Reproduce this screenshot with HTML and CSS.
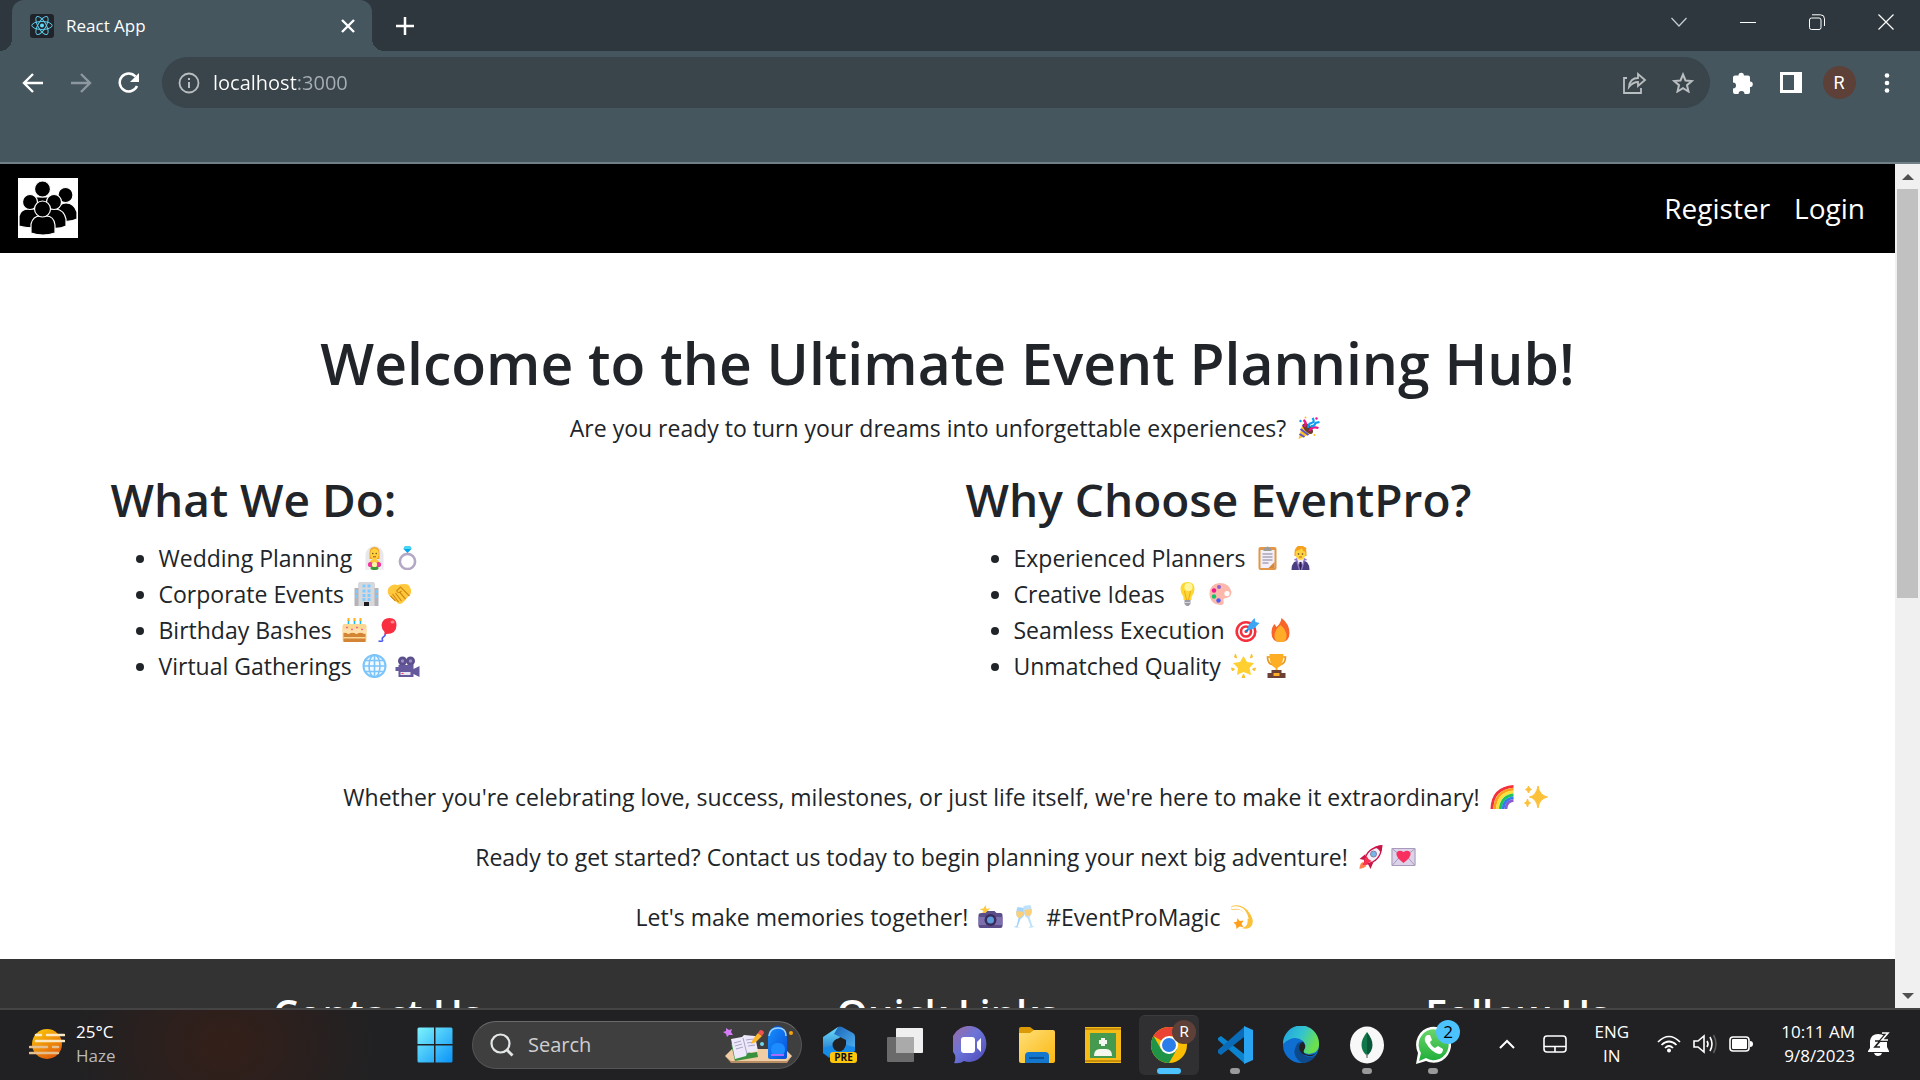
FILE: index.html
```html
<!DOCTYPE html>
<html lang="en">
<head>
<meta charset="utf-8">
<title>React App</title>
<link rel="stylesheet" href="styles.css">
</head>
<body>
<svg class="sprite" aria-hidden="true">
  <defs>
    <linearGradient id="g-win" x1="0" y1="0" x2="1" y2="1"><stop offset="0" stop-color="#7df3fc"/><stop offset="1" stop-color="#0a93f8"/></linearGradient>
    <linearGradient id="g-sun" x1="0" y1="0" x2="0.6" y2="1"><stop offset="0" stop-color="#fccf08"/><stop offset="1" stop-color="#e35f0b"/></linearGradient>
    <linearGradient id="g-chat" x1="0" y1="0" x2="1" y2="1"><stop offset="0" stop-color="#a06a9e"/><stop offset="0.45" stop-color="#6b74d8"/><stop offset="1" stop-color="#4d49b8"/></linearGradient>
    <linearGradient id="g-folder" x1="0" y1="0" x2="1" y2="1"><stop offset="0" stop-color="#ffdf79"/><stop offset="1" stop-color="#fbb811"/></linearGradient>
    <linearGradient id="g-m1" x1="0" y1="0" x2="0" y2="1"><stop offset="0" stop-color="#6fe0fa"/><stop offset="1" stop-color="#0f62c4"/></linearGradient>
    <linearGradient id="g-m2" x1="0" y1="0" x2="1" y2="1"><stop offset="0" stop-color="#1a63b8"/><stop offset="1" stop-color="#4fb4f0"/></linearGradient>
    <linearGradient id="g-edge" x1="0" y1="0" x2="1" y2="0.4"><stop offset="0" stop-color="#1f9fe0"/><stop offset="0.55" stop-color="#33c4d0"/><stop offset="1" stop-color="#6be04c"/></linearGradient>
    <linearGradient id="g-bag" x1="0" y1="0" x2="1" y2="1"><stop offset="0" stop-color="#1590ff"/><stop offset="1" stop-color="#0a4fd8"/></linearGradient>
    <linearGradient id="g-wa" x1="0" y1="0" x2="0" y2="1"><stop offset="0" stop-color="#6bd56b"/><stop offset="1" stop-color="#1fae39"/></linearGradient>
  </defs>
  <symbol id="popper" viewBox="0 0 24 24"><path d="M2 23 6 8q7 2 10 9z" fill="#fcc21b"/><path d="m3 18 5 3m-4-8 8 6M6 9l8 8" stroke="#5b51d8" stroke-width="2"/><ellipse cx="11.500" cy="12.500" rx="3.500" ry="6.500" transform="rotate(-42 11.500 12.500)" fill="#6d3b2c"/><path d="M8 11Q11 7 7 4M13 15q2-5 9-3" stroke="#f2138b" stroke-width="2.200" fill="none"/><path d="M12 12q-1-4 3-5t1-5M14 10q4 1 5-3l4-1" stroke="#0f9df2" stroke-width="2.200" fill="none"/><circle cx="20" cy="2.500" r="1.200" fill="#f2138b"/><circle cx="4" cy="5" r="1.200" fill="#0f9df2"/><circle cx="9" cy="1.500" r="1" fill="#fcc21b"/><circle cx="18" cy="19" r="1" fill="#fcc21b"/></symbol>
  <symbol id="bride" viewBox="0 0 24 24"><path d="M3 24V9a9 9 0 0 1 18 0v15z" fill="#e8e8ec"/><path d="M4 24q0-9 8-9t8 9z" fill="#f4f0f2"/><path d="M7 7q0-6 5-6t5 6v6H7z" fill="#f5a623"/><ellipse cx="12" cy="8" rx="4.300" ry="5.500" fill="#ffd23f"/><path d="M7 17q1-4 5-4t5 4z" fill="#ffc83d"/><circle cx="10.300" cy="7.500" r=".7" fill="#5a3a22"/><circle cx="13.700" cy="7.500" r=".7" fill="#5a3a22"/><path d="M10.500 10.800h3" stroke="#c0392b"/><ellipse cx="12" cy="22" rx="4" ry="2" fill="#3a9b35"/><circle cx="8" cy="18.500" r="2.600" fill="#f0379a"/><circle cx="16" cy="18.500" r="2.600" fill="#f0379a"/><circle cx="12" cy="18.500" r="2.600" fill="#fdf3a0"/></symbol>
  <symbol id="ring" viewBox="0 0 24 24"><circle cx="12" cy="15.500" r="7.600" fill="none" stroke="#b4a9c4" stroke-width="2.600"/><path d="m12 7-4-4 1.500-3h5L16 3z" fill="#08a4ea"/><path d="M8 3 9.500 0h5L16 3z" fill="#44d8f5"/></symbol>
  <symbol id="office" viewBox="0 0 24 24"><path d="M0 6h4V2q0-2 2-2h12q2 0 2 2v4h4v18H0z" fill="#b3b3b8"/><path d="M4 2q0-2 2-2h12q2 0 2 2v22H4z" fill="#d8d8dc"/><path d="M8 2.500h3v3H8zm5 0h3v3h-3zm-5 5h3v3H8zm5 0h3v3h-3zm-5 4.500h3v3H8zm5 0h3v3h-3zm-5 4h3v3H8zm5 0h3v3h-3zM1 8h2v3H1zm0 5h2v3H1zm20-5h2v3h-2zm0 5h2v3h-2z" fill="#7ecbff"/><path d="M9.500 20h5v4h-5z" fill="#1d1d20"/></symbol>
  <symbol id="handshake" viewBox="0 0 24 24"><path d="M1 6q4-5 9-3 8-2 11 0 4 5 2 9l-7 8q-4 4-7 0L2 14Q-1 10 1 6z" fill="#ffc83d"/><path d="m3 14 5 5m-3-7 6 8m-3-9 6 8m-2-9 6 7M9 9l4-4 9 9M9 9q2 3 5 0" fill="none" stroke="#d18a12" stroke-width="1.200"/></symbol>
  <symbol id="cake" viewBox="0 0 24 24"><path d="M6 2v6m6-6v6m6-6v6" stroke="#22b8e8" stroke-width="1.600"/><path d="M6 0v3m6-3v3m6-3v3" stroke="#ffb01f" stroke-width="2"/><rect y="6" width="24" height="18" rx="2" fill="#fbd794"/><path d="M1 15h22v9H1z" fill="#d38435"/><path d="M1 19h22v1.500H1z" fill="#fbd794"/><path d="M0 11h24v4q-2 2-4 0t-4 0-4 0-4 0-4 0-4 0z" fill="#ffe1ad"/><path d="m4 9 1 1m4 2 1-1m4-2 1 1m4 2 1-1" stroke="#f0379a" stroke-width="1.400"/></symbol>
  <symbol id="balloon" viewBox="0 0 24 24"><path d="M10 15q0 3-2 4t-1 3-4 1" stroke="#4b5cf0" stroke-width="1.500" fill="none"/><path d="M14 0q7 0 7 7 0 9-10 9l-2 1 0-3Q6 11 6 7q1-7 8-7z" fill="#f92f40"/><ellipse cx="17" cy="4" rx="2" ry="1.500" fill="#ff8791"/></symbol>
  <symbol id="globe" viewBox="0 0 24 24"><circle cx="12" cy="12" r="11" fill="#f3faff" stroke="#7cc4fa" stroke-width="2"/><g fill="none" stroke="#7cc4fa" stroke-width="1.600"><ellipse cx="12" cy="12" rx="5.500" ry="11"/><path d="M12 1v22M1 12h22M3 6.500h18M3 17.500h18"/></g></symbol>
  <symbol id="camera-movie" viewBox="0 0 24 24"><circle cx="7" cy="7" r="4.500" fill="#5b4f8c"/><circle cx="15" cy="7" r="4.500" fill="#5b4f8c"/><circle cx="7" cy="7" r="1.700" fill="#9a8cc4"/><circle cx="15" cy="7" r="1.700" fill="#9a8cc4"/><path d="M0 13h3v-2h15v4l6-3v11l-6-3v3H3v-6H0z" fill="#65589c"/><path d="M5 18h10v3H5z" fill="#e8e4f0"/><path d="M6 19h2v1H6z" fill="#f92f60"/></symbol>
  <symbol id="clipboard" viewBox="0 0 24 24"><rect x="3" y="1" width="18" height="23" rx="2" fill="#e19747"/><path d="M5 4h14v18H5z" fill="#f3eef8"/><path d="m13 22 6-6v6z" fill="#d3883e"/><path d="M8 4q0-2 2-2 2-3 4 0 2 0 2 2v1H8z" fill="#9b9b9b"/><path d="M7 8h10M7 11h10M7 14h10M7 17h6" stroke="#a9a5b5" stroke-width="1.300"/></symbol>
  <symbol id="office-worker" viewBox="0 0 24 24"><path d="M3 24q0-10 9-10t9 10z" fill="#4a3d80"/><path d="m8 14 4 9 4-9z" fill="#f0ecf8"/><path d="m11 16-1 8h4l-1-8z" fill="#2a2350"/><path d="m6 14 2-1 3 11M18 14l-2-1-3 11" stroke="#9377c8" stroke-width="1.500" fill="none"/><path d="M6 7q0-7 6-7t6 7v3H6z" fill="#f5a11f"/><ellipse cx="12" cy="8" rx="5" ry="6" fill="#ffd23f"/><path d="M7 5q5-1 6-3 1 3 4 4l1-4-4-2H9z" fill="#f5a11f"/><circle cx="10" cy="8" r=".8" fill="#5a3a22"/><circle cx="14" cy="8" r=".8" fill="#5a3a22"/><path d="M10.500 11h3" stroke="#b76a1c"/></symbol>
  <symbol id="bulb" viewBox="0 0 24 24"><path d="M12 0q7 0 7 7 0 4-3 8v3H8v-3Q5 11 5 7q0-7 7-7z" fill="#fdd835"/><circle cx="13" cy="5" r="4" fill="#fff59d"/><path d="m9 9 2 9h2l2-9" fill="none" stroke="#f0a81c"/><path d="M9 18h6v4l-2 2h-2l-2-2z" fill="#9c9ca6"/><path d="M9 20.500h6" stroke="#d6d6dc"/></symbol>
  <symbol id="palette" viewBox="0 0 24 24"><path d="M11 1q10 0 12 9 0 5-5 6-4 0-3 3t-2 4Q2 23 1 12 1 2 11 1z" fill="#fbb8ab"/><circle cx="10.500" cy="5" r="2" fill="#8c62d0"/><circle cx="5.500" cy="8.500" r="2.200" fill="#f0188c"/><circle cx="5.500" cy="14.500" r="2.200" fill="#14c26c"/><circle cx="10" cy="18.500" r="2.200" fill="#4b5cf0"/><circle cx="18.500" cy="11.500" r="2.600" fill="#fff"/></symbol>
  <symbol id="target" viewBox="0 0 24 24"><circle cx="10.500" cy="13.500" r="9.300" fill="#fff" stroke="#f4303c" stroke-width="2.600"/><circle cx="10.500" cy="13.500" r="5" fill="#fff" stroke="#f4303c" stroke-width="2.600"/><circle cx="10.500" cy="13.500" r="1.600" fill="#f4303c"/><path d="m10.500 13.500 9-9" stroke="#1577c9" stroke-width="2"/><path d="m12 12 1-5 6-7 1 4 4 1-6 6z" fill="#3ba7f5"/></symbol>
  <symbol id="fire" viewBox="0 0 24 24"><path d="M13 0q8 6 8 15 0 9-9 9t-9-9q0-6 3-9l2 3q4-3 5-9z" fill="#f8652a"/><path d="M12 7q6 5 6 11 0 6-6 6t-6-6q0-6 6-11z" fill="#ffad28"/></symbol>
  <symbol id="glowing-star" viewBox="0 0 24 24"><path d="m12 2 3.500 6 7 1-4.500 5 1.500 7-7.500-3-6.500 3 1-7-5-5 7-1z" fill="#ffd02f"/><path d="m4 0 1 4-2-1zm16 0-1 4 2-1zM0 14l3 1-2 2zm24 0-3 1 2 2zM12 20l1.500 4h-3z" fill="#fbc02d" stroke="#fbc02d"/></symbol>
  <symbol id="trophy" viewBox="0 0 24 24"><path d="M6 3H3q0 7 6 8m9-8h3q0 7-6 8" fill="none" stroke="#e8971e" stroke-width="1.700"/><path d="M5 0h14q0 12-6 14v4h-2v-4Q5 12 5 0z" fill="#fdae25"/><path d="M7 16h10v3h4v5H3v-5h4z" fill="#6d4234"/><path d="M9 19h6v3H9z" fill="#fdae25"/></symbol>
  <symbol id="rainbow" viewBox="0 0 24 24"><g fill="none" stroke-width="2.800"><path d="M1.400 24Q2 3 23 1.400" stroke="#f4303c"/><path d="M4.200 24Q5 6 23 4.200" stroke="#ff9f1c"/><path d="M7 24Q8 8 23 7" stroke="#fce03a"/><path d="M9.800 24Q11 11 23 9.800" stroke="#1dc35b"/><path d="M12.600 24Q13 14 23 12.600" stroke="#2f7bf0"/><path d="M15.400 24Q16 16 23 15.400" stroke="#8c5bd0"/></g></symbol>
  <symbol id="sparkles" viewBox="0 0 24 24"><path d="M14.500 1q1.500 9.500 9.500 11-8 1.500-9.500 11Q13 13.500 6 12q7-1.500 8.500-11zM5 1q.5 3 3 3.500Q5.500 5 5 8q-.5-3-3-3.500Q4.500 4 5 1zM4 14q.5 3.500 3 4-2.500.5-3 4-.5-3.500-3-4 2.500-.5 3-4z" fill="#fcc13a" stroke="#fcc13a"/></symbol>
  <symbol id="rocket" viewBox="0 0 24 24"><path d="m7 9-6 5 5 1zm8 8-3 7-3-6z" fill="#ca1448"/><path d="M4 17q-3 2-3 7 5-1 7-3z" fill="#ff7f4d"/><path d="M6 16Q8 3 23 1q0 15-15 18z" fill="#f3eff7" stroke="#ca1448" stroke-width="1.300"/><path d="M16 2q4-2 8-2 0 4-2 8-1-4-6-6z" fill="#ca1448"/><path d="m4 20 4-9 2 3 3 2-6 4z" fill="#f92f50"/><circle cx="15" cy="9" r="3" fill="#76b7e8" stroke="#8d7ca5"/></symbol>
  <symbol id="love-letter" viewBox="0 0 24 24"><rect x="0" y="3" width="24" height="18" rx="1" fill="#dcd3e8"/><path d="m1 4 11 9L23 4M1 20l8-9m14 9-8-9M.5 3.500h23v17H.5z" fill="none" stroke="#a99abc"/><path d="M12 18Q4 12 5 8q2-4 7-1 5-3 7 1 1 4-7 10z" fill="#f92f60"/></symbol>
  <symbol id="flash-camera" viewBox="0 0 24 24"><path d="m7 0 1 4 4-1-3 3 2 3H3l2-3-4-2 4-.5z" fill="#ffc83d"/><path d="M3 8h4l2-2h7l2 2h4q2 0 2 2v11q0 2-2 2H2q-2 0-2-2V10q0-2 3-2z" fill="#5a4d8a"/><path d="M0 12h24v8H0z" fill="#7d6fae"/><circle cx="12" cy="15" r="6" fill="#382c5c"/><circle cx="12" cy="15" r="3.500" fill="#5f9bd8"/></symbol>
  <symbol id="glasses" viewBox="0 0 24 24"><path d="m6 2 7 1q1 9-4 11l-3 8 3 1-7-1 3-1 2-8q-4-3-1-11z" fill="#a7d5fa"/><path d="m12 1 7-1q3 8-1 12l3 9 2 1-6 1 2-2-3-8q-5-2-4-12z" fill="#bfe1fb"/><path d="m5 6 7 1q0 5-4 6-4-1-3-7zm8-1 7-1q1 6-3 7-4 0-4-6z" fill="#fccf7a"/></symbol>
  <symbol id="dizzy" viewBox="0 0 24 24"><path d="M1 1q11-3 18 7 6 9 1 14-3 3-9 1 7-1 6-9Q14 2 1 5z" fill="#fcc13a"/><path d="M1 3Q14 0 17 14" stroke="#fff" stroke-width="2.500" fill="none"/><path d="m7 13 2 3 4-.5-2 3.500 2 3-4-.5L6 24l-.5-4L3 17.500l3.500-1z" fill="#ff9f1c"/></symbol>
</svg>

<header class="browser">
  <div class="tabstrip">
    <div class="tab">
      <svg class="favicon" viewBox="0 0 24 24"><rect width="24" height="24" rx="3" fill="#20232a"/><g fill="none" stroke="#5ccbe8" stroke-width="1"><ellipse cx="12" cy="11.500" rx="10.200" ry="4"/><ellipse cx="12" cy="11.500" rx="10.200" ry="4" transform="rotate(60 12 11.500)"/><ellipse cx="12" cy="11.500" rx="10.200" ry="4" transform="rotate(120 12 11.500)"/></g><circle cx="12" cy="11.500" r="2" fill="#61dafb"/></svg>
      <span class="tab-title">React App</span>
      <button class="tab-close" aria-label="Close tab"><svg width="14" height="14" viewBox="0 0 14 14"><path d="m1 1 12 12M13 1 1 13" stroke="#fff" stroke-width="2.400"/></svg></button>
    </div>
    <button class="new-tab" aria-label="New tab"><svg width="18" height="18" viewBox="0 0 18 18"><path d="M9 0v18M0 9h18" stroke="#fff" stroke-width="2.500"/></svg></button>
    <div class="window-controls">
      <button aria-label="Search tabs"><svg width="16" height="16" viewBox="0 0 16 16"><path d="m.5 4 7.500 8 7.500-8" fill="none" stroke="#c9cdd0" stroke-width="1.200"/></svg></button>
      <button aria-label="Minimize"><svg width="16" height="16" viewBox="0 0 16 16"><path d="M0 8.500h16" stroke="#fff"/></svg></button>
      <button aria-label="Restore"><svg width="16" height="16" viewBox="0 0 16 16"><rect x=".5" y="4" width="11.500" height="11.500" rx="2" fill="none" stroke="#fff"/><path d="M3 .8h8.500q4 0 4 4V12" fill="none" stroke="#fff"/></svg></button>
      <button aria-label="Close"><svg width="16" height="16" viewBox="0 0 16 16"><path d="m.5.5 15 15m0-15-15 15" stroke="#fff" stroke-width="1.200"/></svg></button>
    </div>
  </div>
  <div class="toolbar">
    <div class="tool-group">
      <button aria-label="Back"><svg width="22" height="20" viewBox="0 0 22 20"><path d="M21 10H2m9-9-9 9 9 9" fill="none" stroke="#fff" stroke-width="2.400"/></svg></button>
      <button aria-label="Forward"><svg width="22" height="20" viewBox="0 0 22 20"><path d="M1 10h19m-9-9 9 9-9 9" fill="none" stroke="#8d989e" stroke-width="2.400"/></svg></button>
      <button aria-label="Reload"><svg width="22" height="22" viewBox="0 0 22 22"><path d="M17.500 4.500A9 9 0 1 0 19 14" fill="none" stroke="#fff" stroke-width="2.500"/><path d="M21 1v9h-9z" fill="#fff"/></svg></button>
    </div>
    <div class="omnibox">
      <svg width="22" height="22" viewBox="0 0 22 22"><circle cx="11" cy="11" r="9.500" fill="none" stroke="#b9bec1" stroke-width="1.800"/><path d="M11 10v6M11 6v2" stroke="#b9bec1" stroke-width="2"/></svg>
      <input class="url" type="text" aria-label="Address" value="localhost:3000">
      <button aria-label="Share"><svg width="24" height="22" viewBox="0 0 24 22"><path d="M4 6H1v15h17v-5" fill="none" stroke="#b9bec1" stroke-width="1.800"/><path d="M6 15Q7 6 15 6V2l7 6-7 6v-4q-5 0-9 5z" fill="none" stroke="#b9bec1" stroke-width="1.800"/></svg></button>
      <button aria-label="Bookmark"><svg width="22" height="21" viewBox="0 0 22 21"><path d="m11 2.500 2.500 6 6.300.5-4.800 4.200 1.500 6.300L11 16.200l-5.500 3.300L7 13.200 2.200 9l6.300-.5z" fill="none" stroke="#b9bec1" stroke-width="2"/></svg></button>
    </div>
    <div class="tool-group">
      <button aria-label="Extensions"><svg width="22" height="22" viewBox="0 0 22 22"><path d="M3 3.500h3.500a2.700 2.700 0 0 1 5.400 0H16q2 0 2 2v4a2.800 2.800 0 0 1 0 5.600V20q0 2-2 2h-3.500a3 3 0 0 0-6 0H3q-2 0-2-2v-3.500a3 3 0 0 0 0-6v-5q0-2 2-2z" fill="#fff"/></svg></button>
      <button aria-label="Side panel"><svg width="22" height="21" viewBox="0 0 22 21"><path d="M0 0h22v21H0zm3 3v15h11V3z" fill="#fff" fill-rule="evenodd"/></svg></button>
      <button aria-label="Profile"><span class="avatar">R</span></button>
      <button aria-label="Menu"><svg width="6" height="20" viewBox="0 0 6 20"><g fill="#fff"><circle cx="3" cy="2.500" r="2.300"/><circle cx="3" cy="10" r="2.300"/><circle cx="3" cy="17.500" r="2.300"/></g></svg></button>
    </div>
  </div>
</header>

<div class="viewport">
  <div class="page">
    <nav class="navbar">
      <a href="#" aria-label="Home"><svg class="logo" viewBox="0 0 60 60"><rect width="60" height="60" fill="#fff"/><g stroke="#fff" stroke-width="1.200"><path d="M39 43V33q2-8 9-8 8 0 11 9v7q-5 3-14 2z"/><circle cx="47.500" cy="17" r="7.500"/><path d="M17 33V19h16v14z"/><circle cx="24.500" cy="11" r="8"/><path d="M1 48V38q2-7 9-7h11v19q-14 0-20-2z"/><path d="M29 49V31h9q8 1 10 10v7q-8 4-19 1z"/><circle cx="12" cy="24" r="7.500"/><circle cx="36" cy="24" r="7.500"/><path d="M13 55V46q2-8 9-8h6q8 0 9 9v8q-12 4-24 0z"/><circle cx="24.500" cy="31" r="8"/></g></svg></a>
      <div class="nav-links">
        <a href="#register">Register</a>
        <a href="#login">Login</a>
      </div>
    </nav>
    <main class="container">
      <section class="intro">
        <h1>Welcome to the Ultimate Event Planning Hub!</h1>
        <p>Are you ready to turn your dreams into unforgettable experiences? <svg class="emoji"><use href="#popper"/></svg></p>
      </section>
      <div class="row">
        <section class="col">
          <h2>What We Do:</h2>
          <ul>
            <li>Wedding Planning <svg class="emoji"><use href="#bride"/></svg><svg class="emoji"><use href="#ring"/></svg></li>
            <li>Corporate Events <svg class="emoji"><use href="#office"/></svg><svg class="emoji"><use href="#handshake"/></svg></li>
            <li>Birthday Bashes <svg class="emoji"><use href="#cake"/></svg><svg class="emoji"><use href="#balloon"/></svg></li>
            <li>Virtual Gatherings <svg class="emoji"><use href="#globe"/></svg><svg class="emoji"><use href="#camera-movie"/></svg></li>
          </ul>
        </section>
        <section class="col">
          <h2>Why Choose EventPro?</h2>
          <ul>
            <li>Experienced Planners <svg class="emoji"><use href="#clipboard"/></svg><svg class="emoji"><use href="#office-worker"/></svg></li>
            <li>Creative Ideas <svg class="emoji"><use href="#bulb"/></svg><svg class="emoji"><use href="#palette"/></svg></li>
            <li>Seamless Execution <svg class="emoji"><use href="#target"/></svg><svg class="emoji"><use href="#fire"/></svg></li>
            <li>Unmatched Quality <svg class="emoji"><use href="#glowing-star"/></svg><svg class="emoji"><use href="#trophy"/></svg></li>
          </ul>
        </section>
      </div>
      <section class="closing">
        <p>Whether you're celebrating love, success, milestones, or just life itself, we're here to make it extraordinary! <svg class="emoji"><use href="#rainbow"/></svg><svg class="emoji"><use href="#sparkles"/></svg></p>
        <p>Ready to get started? Contact us today to begin planning your next big adventure! <svg class="emoji"><use href="#rocket"/></svg><svg class="emoji"><use href="#love-letter"/></svg></p>
        <p>Let's make memories together! <svg class="emoji"><use href="#flash-camera"/></svg><svg class="emoji"><use href="#glasses"/></svg> #EventProMagic <svg class="emoji"><use href="#dizzy"/></svg></p>
      </section>
    </main>
    <footer class="footer">
      <div class="footer-row">
        <h3>Contact Us</h3>
        <h3>Quick Links</h3>
        <h3>Follow Us</h3>
      </div>
    </footer>
  </div>
  <div class="scrollbar">
    <svg width="12" height="6" viewBox="0 0 12 6"><path d="m6 0 6 6H0z" fill="#505050"/></svg>
    <div class="track"><div class="thumb"></div></div>
    <svg width="12" height="6" viewBox="0 0 12 6"><path d="M0 0h12L6 6z" fill="#505050"/></svg>
  </div>
</div>

<footer class="taskbar">
  <div class="weather">
    <svg width="36" height="32" viewBox="0 0 36 32"><circle cx="18" cy="16" r="15" fill="url(#g-sun)"/><g stroke-width="2.600" stroke-linecap="round"><path d="M7 7h5m6 0h17M7 13h28" stroke="#fbe7c0"/><path d="M1 19h17m6 0h5M1 25h28" stroke="#e6bf8f"/></g></svg>
    <div class="stack"><span>25°C</span><span class="dim">Haze</span></div>
  </div>
  <div class="apps">
    <button class="app" aria-label="Start"><svg width="36" height="36" viewBox="0 0 36 36"><path d="M2 .5h15v16.500H.5V2q0-1.500 1.500-1.500zM18.500.5H34q1.500 0 1.500 1.500v15h-17zM.5 18.500H17v17H2q-1.500 0-1.500-1.500zM18.500 18.500h17V34q0 1.500-1.500 1.500H18.500z" fill="url(#g-win)"/></svg></button>
    <div class="search">
      <svg width="24" height="24" viewBox="0 0 24 24"><circle cx="10.500" cy="10.500" r="9" fill="none" stroke="#e4e7e8" stroke-width="2.200"/><path d="m17 17 5.500 5.500" stroke="#e4e7e8" stroke-width="2.800"/></svg>
      <input type="search" aria-label="Search" placeholder="Search">
      <svg width="72" height="40" viewBox="0 0 72 40"><path d="m2 31 7-7h53l7 7-5 6H8z" fill="#f0cda4"/><path d="m3 32 5 4h56l4-4-4 6H8z" fill="#b98d64"/><path d="m8 19 3-1 17 10 6-1 1 5-23 4z" fill="#37913e"/><path d="m8 14 11-2 2-2 11 1 3 15-11 2-1 3-11 3z" fill="#eee9fa"/><path d="m20 13 4 16M11 18l7-2m-6 5 7-2m-6 5 7-2m3-7 7-1m-6 4 7-1m-6 4 7-1" stroke="#aaa0c8"/><path d="m28 19 2-5 5-6 4 3-6 6z" fill="#fdb62c"/><path d="m35 8 2-3q4 0 4 3l-2 3z" fill="#ef5350"/><path d="m3 3 3 2 3-1-1 3 2 3H6l-2 2-1-3-3-2 3-1z" fill="#d47cf5"/><path d="M49 5q6-7 11 0" fill="none" stroke="#114fb5" stroke-width="2"/><path d="M45 13q0-11 10-11 9 0 9 11v19q0 2-3 2H48q-3 0-3-2z" fill="url(#g-bag)"/><path d="M46 11q1-8 9-8t8 8" fill="none" stroke="#9dd0ff" stroke-width="1.500"/><rect x="48" y="18" width="14" height="13" rx="6" fill="#1d8cff"/><path d="M48 30h13" stroke="#a86bff" stroke-width="2"/><circle cx="39" cy="19" r="2" fill="#6fd6e8"/><circle cx="68" cy="8" r="2" fill="#f5a30e"/></svg>
    </div>
    <button class="app" aria-label="Microsoft 365"><svg width="36" height="38" viewBox="0 0 36 38"><path d="M2 11 17 1l8 6-11 8v12l-6 5-6-5z" fill="url(#g-m1)"/><path d="M17 1q2-1 4 0l11 6q2 1 2 4v14l-9-5v-6l-12-6z" fill="url(#g-m2)"/><path d="M2 22v5l8 5h14l10-7v-4l-9-2-7 6-7-5z" fill="#168be8"/><circle cx="18" cy="19" r="6.500" fill="#212123"/><rect x="9" y="26" width="27" height="11" rx="3" fill="#ffc60b"/><text class="pre" x="22.500" y="35" text-anchor="middle">PRE</text></svg></button>
    <button class="app" aria-label="Task view"><svg width="36" height="34" viewBox="0 0 36 34"><rect x="9" width="27" height="25" rx="1" fill="#efefef"/><rect y="9" width="27" height="25" rx="1" fill="#777" fill-opacity=".85"/><path d="M9 9h18v16H9z" fill="#aaa"/></svg></button>
    <button class="app" aria-label="Chat"><svg width="36" height="38" viewBox="0 0 36 38"><path d="M18 0a17 18 0 1 1-7 35q-4 3-10 2 2-3 1-8A18 18 0 0 1 18 0z" fill="url(#g-chat)"/><rect x="8" y="11" width="14" height="16" rx="3" fill="#fff"/><path d="m24 16 4-4v14l-4-4z" fill="#fff"/></svg></button>
    <button class="app" aria-label="File Explorer"><svg width="36" height="36" viewBox="0 0 36 36"><path d="M0 2q0-2 2-2h9l4 3v8H0z" fill="#dc9b06"/><path d="M0 6h11l4-3h19q2 0 2 2v29q0 2-2 2H2q-2 0-2-2z" fill="url(#g-folder)"/><path d="M6 36v-7q0-4 4-4h16q4 0 4 4v7z" fill="#1377cd"/><path d="M10 31h15" stroke="#0a4f94" stroke-width="2"/></svg></button>
    <button class="app" aria-label="Classroom"><svg width="36" height="36" viewBox="0 0 36 36"><rect width="36" height="36" fill="#f5bc18"/><path d="M0 2h36M0 34h36" stroke="#c98f0c" stroke-width="2"/><rect x="5" y="6" width="26" height="25" fill="#469a4f"/><path d="M16 11h4v2h2v4h-2v2h-4v-2h-2v-4h2z" fill="#f4f7f0"/><path d="M9 29q0-7 6-7h6q6 0 6 7z" fill="#f4f7f0"/></svg></button>
    <button class="app active" aria-label="Chrome"><svg width="36" height="36" viewBox="0 0 36 36"><circle cx="18" cy="18" r="18" fill="#fbbc04"/><path d="M18 18 2.500 9A18 18 0 0 1 33.600 9H18z" fill="#ea4335"/><path d="M2.500 9A18 18 0 0 0 18 36l8-14-8-4-8 4z" fill="#1f9447"/><circle cx="18" cy="18" r="9" fill="#fff"/><circle cx="18" cy="18" r="7" fill="#2b7de9"/></svg><span class="badge profile">R</span><span class="mark"></span></button>
    <button class="app" aria-label="Visual Studio Code"><svg width="36" height="38" viewBox="0 0 36 38"><path d="m1 12 3-2 23 18v9L1 14z" fill="#0b84d0"/><path d="m1 27 3 2 23-18V1L1 24z" fill="#0a6cb8"/><path d="m27 0 9 4v30l-9 4z" fill="#29a4f0"/></svg><span class="mark"></span></button>
    <button class="app" aria-label="Edge"><svg width="36" height="38" viewBox="0 0 36 38"><circle cx="18" cy="19" r="18" fill="#0f6fd0"/><path d="M0 18A18 18 0 0 1 36 17q1 10-10 11-8-1-5-5 3-4-1-8Q11 8 0 18z" fill="url(#g-edge)"/><path d="M13 20q2-5 8-4-6 8 0 13 6 4 12 0-5 8-14 8Q8 30 13 20z" fill="#0c4a8c"/><path d="M20 16q4 4 1 8-2 4 5 5 6 0 8-3-3 5-9 4-9-2-9-9 1-4 4-5z" fill="#212123"/></svg></button>
    <button class="app" aria-label="MongoDB Compass"><svg width="36" height="38" viewBox="0 0 36 38"><ellipse cx="18" cy="19" rx="17" ry="18.500" fill="#f8f8f8"/><path d="M18 6q-11 14 0 24z" fill="#10774a"/><path d="M18 6q11 14 0 24z" fill="#09583a"/><path d="M18 28v4" stroke="#888" stroke-width="1.500"/></svg><span class="mark"></span></button>
    <button class="app" aria-label="WhatsApp"><svg width="36" height="40" viewBox="0 0 36 40"><path d="M1 39 3 28A17.500 18 0 1 1 11 36z" fill="#fff"/><path d="m4 36 2-8A15 15.500 0 1 1 11 33z" fill="url(#g-wa)"/><path d="M12 10q-4 3-1 8 5 9 13 11 4 0 4-5l-5-3-3 2q-4-2-5-6l2-2-2-5z" fill="#fff"/></svg><span class="badge count">2</span><span class="mark"></span></button>
  </div>
  <div class="tray">
    <button aria-label="Hidden icons"><svg width="16" height="10" viewBox="0 0 16 10"><path d="m1 9 7-7 7 7" fill="none" stroke="#fff" stroke-width="2"/></svg></button>
    <button aria-label="Touchpad"><svg width="24" height="18" viewBox="0 0 24 18"><rect x="1" y="1" width="22" height="16" rx="3" fill="none" stroke="#fff" stroke-width="1.600"/><path d="M1 11.500h22M12 11.500V17" stroke="#fff" stroke-width="1.600"/></svg></button>
    <button class="stack center"><span>ENG</span><span>IN</span></button>
    <button class="status" aria-label="Network, sound, battery">
      <svg width="24" height="18" viewBox="0 0 24 18"><g fill="none" stroke="#fff" stroke-width="1.700"><path d="M1 7q11-11 22 0M4.500 10q7.500-7 15 0M8 13q4-4 8 0"/></g><circle cx="12" cy="15.500" r="2" fill="#fff"/></svg>
      <svg width="24" height="20" viewBox="0 0 24 20"><path d="M1 7h4l6-5v16l-6-5H1z" fill="none" stroke="#fff" stroke-width="1.600"/><path d="M14 7q2 3 0 6m3-10q4 7 0 14" fill="none" stroke="#fff" stroke-width="1.600"/><path d="M20.500 1q5 9 0 18" fill="none" stroke="#5c5c5c" stroke-width="1.600"/></svg>
      <svg width="24" height="16" viewBox="0 0 24 16"><rect x="1" y="1" width="19" height="14" rx="3" fill="none" stroke="#fff" stroke-width="1.600"/><rect x="3" y="3" width="15" height="10" rx="1" fill="#fff"/><path d="M21 5q3 0 3 3t-3 3z" fill="#fff"/></svg>
    </button>
    <button class="clock"><span class="stack end"><span>10:11 AM</span><span>9/8/2023</span></span>
      <svg width="22" height="24" viewBox="0 0 22 24"><path d="M2 16V9q1-7 8-7 8 0 9 7v6l2 4v1H0v-1zM6 21h8q-1 3-4 3t-4-3z" fill="#fff"/><path d="M7 9h5l-5 6h5" fill="none" stroke="#222" stroke-width="1.700"/><path d="M14 1h6l-6 7h6" fill="none" stroke="#222" stroke-width="4"/><path d="M14 1h6l-6 7h6" fill="none" stroke="#fff" stroke-width="1.600"/></svg>
    </button>
  </div>
</footer>
</body>
</html>
```

FILE: styles.css
```css
* { box-sizing: border-box; }

body {
  margin: 0;
  height: 100vh;
  display: flex;
  flex-direction: column;
  overflow: hidden;
  font-family: "Open Sans", "Noto Sans", sans-serif;
  color: #212529;
  background: #fff;
}

button {
  border: 0;
  padding: 0;
  margin: 0;
  background: none;
  font: inherit;
  color: inherit;
}

button,
.window-controls,
.tool-group { display: flex; align-items: center; justify-content: center; }

svg { flex: none; }
.sprite { position: absolute; width: 0; height: 0; }

/* Browser frame */
.browser { flex: none; background: #45565f; border-bottom: 2px solid #6f8089; }

.tabstrip { display: flex; height: 51px; padding-left: 12px; background: #2d373d; }

.tab {
  position: relative;
  display: flex;
  align-items: center;
  width: 360px;
  padding: 0 16px 0 18px;
  border-radius: 12px 12px 0 0;
  background: #45565f;
  color: #fff;
}
.tab::before,
.tab::after {
  content: "";
  position: absolute;
  bottom: 0;
  width: 12px;
  height: 12px;
}
.tab::before { right: 100%; background: radial-gradient(circle at 0 0, transparent 12px, #45565f 12px); }
.tab::after { left: 100%; background: radial-gradient(circle at 100% 0, transparent 12px, #45565f 12px); }
.favicon { width: 24px; height: 24px; }
.tab-title { flex: 1; margin-left: 12px; font-size: 17px; line-height: 24px; }
.tab-close { width: 16px; height: 24px; }
.new-tab { width: 66px; }

.window-controls { height: 43px; margin-left: auto; }
.window-controls button { width: 69px; height: 43px; }

.toolbar { display: flex; gap: 9px; height: 111px; padding: 6px 9px; align-items: flex-start; }
.tool-group button,
.omnibox button { width: 48px; height: 51px; }

.omnibox {
  flex: 1;
  display: flex;
  align-items: center;
  height: 51px;
  padding: 0 3px 0 16px;
  border-radius: 26px;
  background: #39444b;
}
.url {
  flex: 1;
  margin-left: 13px;
  padding: 0;
  border: 0;
  outline: 0;
  font: 20px/28px "Open Sans", "Noto Sans", sans-serif;
  color: transparent;
  background: linear-gradient(90deg, #fff 85px, #a7afb3 85px);
  background-clip: text;
}
.avatar {
  width: 33px;
  height: 33px;
  border-radius: 50%;
  background: #5d4037;
  color: #fff;
  font: 18px/33px Roboto, sans-serif;
  text-align: center;
}

/* Page */
.viewport { flex: 1; display: flex; min-height: 0; }
.page { flex: 1; min-width: 0; overflow: hidden; font-size: 23px; line-height: 36px; }

.navbar {
  display: flex;
  align-items: center;
  justify-content: space-between;
  padding: 14px 30px 15px 18px;
  background: #000;
}
.logo { display: block; width: 60px; height: 60px; }
.nav-links { display: flex; gap: 24px; }
.nav-links a { color: #fff; font-size: 28px; text-decoration: none; }

.container { max-width: 1710px; margin: 0 auto; padding: 74px 18px 0; }
h1, h2, h3, p, ul { margin: 0; }
h1, h2, h3 { font-weight: 600; }
h1 { font-size: 57px; line-height: 72px; margin-bottom: 11px; }
h2 { font-size: 46px; line-height: 58px; margin-bottom: 12px; }
h3 { font-size: 40px; line-height: 50px; }
.intro { margin-bottom: 24px; text-align: center; }
.row { display: grid; grid-template-columns: 1fr 1fr; gap: 36px; }
ul { padding-left: 48px; }
.closing { padding-top: 95px; text-align: center; }
.closing p { margin-bottom: 24px; }
.emoji { width: 33px; height: 24px; vertical-align: -3px; }

.footer { padding: 30px 0; background: #333; color: #fff; }
.footer-row {
  display: grid;
  grid-template-columns: repeat(3, 1fr);
  max-width: 1710px;
  margin: 0 auto;
  text-align: center;
}

.scrollbar {
  flex: none;
  display: flex;
  flex-direction: column;
  align-items: center;
  gap: 9px;
  width: 25px;
  padding: 10px 2px 9px;
  background: #f0f0f0;
}
.track { flex: 1; width: 100%; }
.thumb { height: 51.5%; background: #c1c1c1; }

/* Taskbar */
.taskbar {
  flex: none;
  display: flex;
  height: 72px;
  border-top: 2px solid #444;
  background: #212123 radial-gradient(ellipse 150px 120px at 225px 50%, #341f19, #212123);
  color: #fff;
  font-size: 17px;
  line-height: 24px;
}
.weather { display: flex; align-items: center; gap: 11px; width: 402px; padding: 0 0 2px 29px; }
.stack { display: flex; flex-direction: column; }
.dim { color: #b9b9b9; }
.center { text-align: center; }
.end { text-align: right; }

.apps { display: flex; align-items: center; }
.app { position: relative; width: 66px; height: 60px; }
.search {
  display: flex;
  align-items: center;
  width: 330px;
  height: 48px;
  margin: 0 4px;
  padding: 0 6px 0 17px;
  border: 1px solid #555;
  border-top-color: #6a6a6a;
  border-radius: 24px;
  background: #3f3f40;
}
.search input {
  flex: 1;
  min-width: 0;
  margin-left: 14px;
  padding: 0;
  border: 0;
  outline: 0;
  background: none;
  font: 20px/28px "Open Sans", "Noto Sans", sans-serif;
  color: #fff;
}
.search input::placeholder { color: #cfcfcf; }
.pre { font: 700 10px "Open Sans", sans-serif; fill: #111; }

.active::before {
  content: "";
  position: absolute;
  z-index: -1;
  inset: 0 3px;
  border-radius: 6px;
  background: #303032;
  border-top: 1px solid #3c3c3e;
}
.active { z-index: 0; }
.mark {
  position: absolute;
  bottom: 1px;
  left: 28px;
  width: 10px;
  height: 6px;
  border-radius: 3px;
  background: #9a9a9a;
}
.active .mark { left: 21px; width: 24px; background: #4cc2ff; }
.badge {
  position: absolute;
  top: 5px;
  right: 6px;
  width: 24px;
  height: 24px;
  border-radius: 50%;
  text-align: center;
}
.profile { background: #5d4037; font: 15px/24px Roboto, sans-serif; }
.count { background: #4cc2ff; color: #000; font-size: 17px; line-height: 24px; }

.tray { display: flex; align-items: center; gap: 28px; margin-left: auto; padding: 0 30px 2px 0; }
.status { gap: 12px; }
.clock { gap: 13px; }
```
